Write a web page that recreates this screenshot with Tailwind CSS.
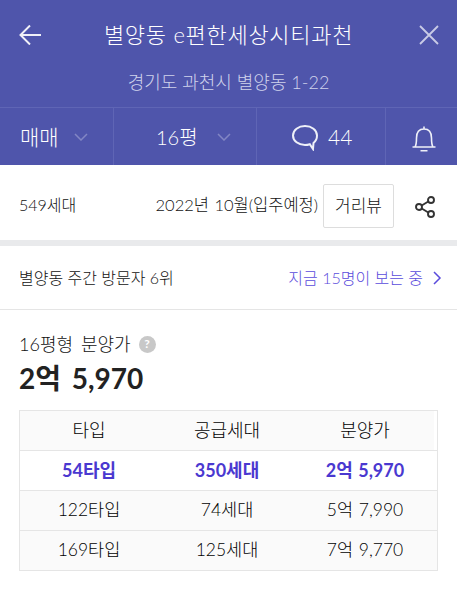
<!DOCTYPE html>
<html lang="ko">
<head>
  <meta charset="UTF-8" />
  <title>별양동 e편한세상시티과천</title>
  <script src="https://cdn.jsdelivr.net/npm/@tailwindcss/browser@4"></script>
</head>
<body class="bg-white font-['Lato','Noto_Sans_CJK_KR',sans-serif] font-light text-[#111] w-[457px] h-[592px] overflow-hidden">
  <!-- header -->
  <header class="bg-[#4f55ab] text-white h-[165px] flex flex-col">
    <div class="h-[70px] flex items-center justify-between pl-[19px] pr-[18px]">
      <svg width="22" height="20" viewBox="0 0 22 20" fill="none" stroke="#f0f0f8" stroke-width="2"><path d="M22 10H2M11 .5L1.500 10l9.500 9.500"/></svg>
      <h1 class="text-[22px] leading-[28px] tracking-[0.7px] mr-[3px]">별양동 e편한세상시티과천</h1>
      <svg width="20" height="20" viewBox="0 0 20 20" fill="none" stroke="#c9cbe6" stroke-width="1.8"><path d="M1 1l18 18M19 1L1 19"/></svg>
    </div>
    <p class="h-[37px] text-center text-[18px] leading-[24px] text-[#d0d3ec]">경기도 과천시 별양동 1-22</p>
    <nav class="flex flex-1 border-t border-[#5f65b5] items-stretch">
      <div class="w-[114px] border-r border-[#5f65b5] flex items-center pl-[20px] gap-[15px]">
        <span class="text-[21px]">매매</span>
        <svg width="14" height="8" viewBox="0 0 14 8" fill="none" stroke="#8286c4" stroke-width="1.5"><path d="M1 1l6 6 6-6"/></svg>
      </div>
      <div class="w-[143px] border-r border-[#5f65b5] flex items-center pl-[42px] gap-[19px]">
        <span class="text-[20px]">16평</span>
        <svg width="14" height="8" viewBox="0 0 14 8" fill="none" stroke="#8286c4" stroke-width="1.5"><path d="M1 1l6 6 6-6"/></svg>
      </div>
      <div class="w-[129px] border-r border-[#5f65b5] flex items-center pl-[35px] gap-[9px]">
        <svg class="mt-[2px]" width="27" height="27" viewBox="0 0 27 27" fill="none" stroke="#eef0f8" stroke-width="2"><path d="M21.500 19C24 17 25 14.500 25 11.500 25 6 19.600 2 13 2S1 6 1 11.500 6.400 21 13 21c1.700 0 3.300-.3 4.800-.8L21 25z"/></svg>
        <span class="text-[21px]">44</span>
      </div>
      <div class="flex-1 flex items-center justify-center pl-[4px]">
        <svg class="mt-[5px]" width="24" height="26" viewBox="0 0 24 26" fill="none" stroke="#eef0f8" stroke-width="1.6"><path d="M3 21c1-1.500 1.500-3 1.500-9C4.500 6 7.500 3 12 3s7.500 3 7.500 9c0 6 .5 7.500 1.500 9M.5 21h23M12 3V.5M8.500 24.800h7"/></svg>
      </div>
    </nav>
  </header>

  <!-- info row -->
  <section class="h-[70px] flex items-center pl-[19px] pr-[21px] pt-[5px] text-[16px] border-b-[6px] border-[#e9eaec] box-content">
    <span>549세대</span>
    <span class="ml-auto text-[16.5px] [word-spacing:1px]">2022년 10월(입주예정)</span>
    <button class="ml-[5px] mt-[2px] w-[71px] h-[44px] border border-[#ddd] rounded-[2px] text-[17px]">거리뷰</button>
    <svg class="ml-[20px] mt-[4px]" width="22" height="22" viewBox="0 0 22 22" fill="none" stroke="#333" stroke-width="1.9"><circle cx="17" cy="4" r="3"/><circle cx="5" cy="11" r="3"/><circle cx="17" cy="18" r="3"/><path d="M7.700 9.500l6.600-4M7.700 12.500l6.600 4"/></svg>
  </section>

  <!-- visitors -->
  <section class="h-[64px] flex items-center justify-between pl-[19px] pr-[15px] text-[16px] border-b border-[#e5e5e5]">
    <span>별양동 주간 방문자 6위</span>
    <span class="flex items-center gap-[10px] text-[#5a4cdc]">지금 15명이 보는 중
      <svg width="9" height="14" viewBox="0 0 9 14" fill="none" stroke="#5a4cdc" stroke-width="1.5"><path d="M1 1l6 6-6 6"/></svg>
    </span>
  </section>

  <!-- price -->
  <section class="px-[19px] pt-[22px]">
    <div class="flex items-center gap-[8px] h-[24px] text-[18px] [word-spacing:3px]">
      <span>16평형 분양가</span>
      <span class="w-[17px] h-[17px] rounded-full bg-[#c8c8c8] text-white text-[12px] font-bold flex items-center justify-center">?</span>
    </div>
    <div class="text-[28px] leading-[38px] font-bold text-[#222] mt-[3px] [word-spacing:4px]">2억 5,970</div>
    <div class="mt-[13px] w-[419px] border border-[#e5e5e5] text-center text-[17.5px] text-black [word-spacing:1px]">
      <div class="border-b border-[#e5e5e5]">
        <div class="w-[414px] h-[39px] bg-[#fafafa] grid grid-cols-3 items-center text-[18px]"><span>타입</span><span>공급세대</span><span>분양가</span></div>
      </div>
      <div class="h-[40px] border-b border-[#e5e5e5] font-bold text-[18px] text-[#4a38d0]">
        <div class="w-[414px] h-full grid grid-cols-3 items-center"><span>54타입</span><span>350세대</span><span>2억 5,970</span></div>
      </div>
      <div class="h-[40px] bg-[#fafafa] border-b border-[#e5e5e5]">
        <div class="w-[414px] h-full grid grid-cols-3 items-center"><span>122타입</span><span>74세대</span><span>5억 7,990</span></div>
      </div>
      <div class="h-[39px] bg-[#fafafa]">
        <div class="w-[414px] h-full grid grid-cols-3 items-center"><span>169타입</span><span>125세대</span><span>7억 9,770</span></div>
      </div>
    </div>
  </section>
</body>
</html>
